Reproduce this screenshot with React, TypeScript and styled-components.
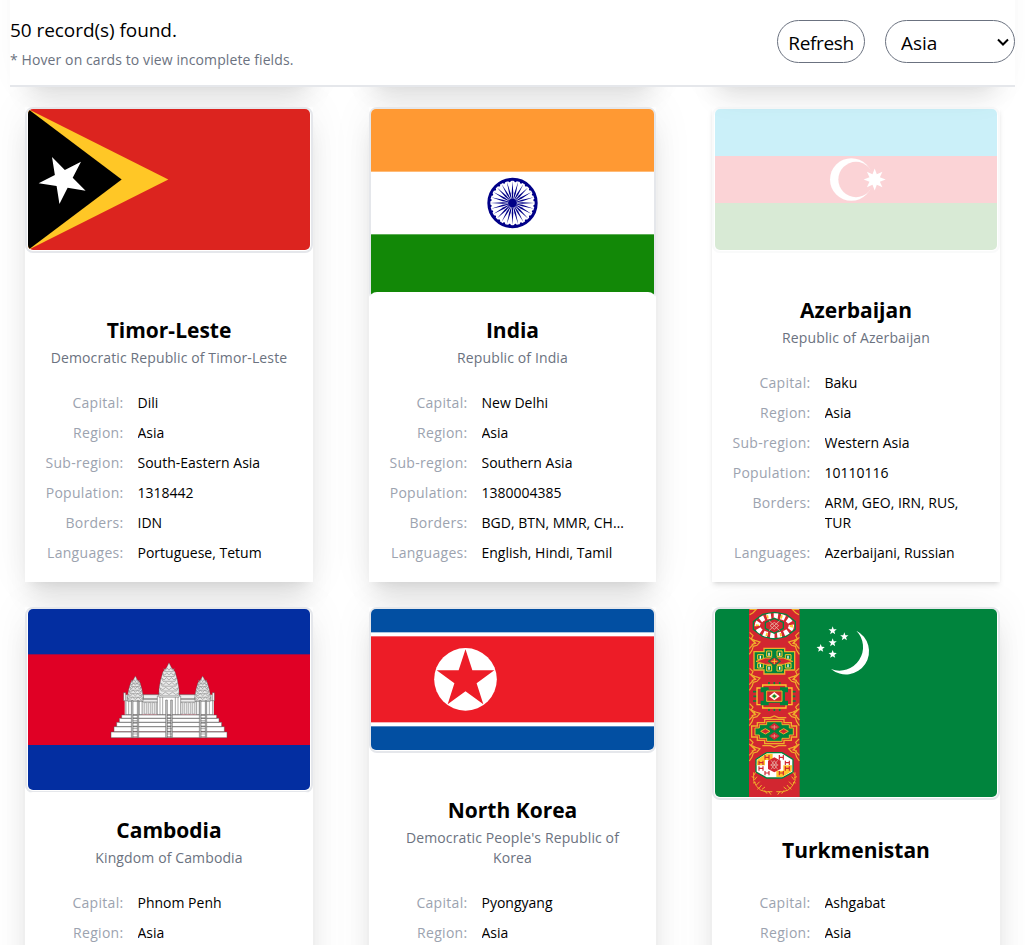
import React from "react";
import styled, { createGlobalStyle, css } from "styled-components";

const GlobalStyle = createGlobalStyle`
  *, *::before, *::after { box-sizing: border-box; }
  body { margin: 0; background: #fff; color: #000; font-family: "Open Sans", "Noto Sans", sans-serif; }
  button, select { font: inherit; color: inherit; }
`;

const Page = styled.div`
  width: 1025px;
  height: 945px;
  overflow: hidden;
  padding: 0 10px;
`;

const Header = styled.header`
  position: relative;
  z-index: 2;
  display: flex;
  justify-content: space-between;
  align-items: flex-start;
  height: 87px;
  padding-top: 15px;
  background: #fff;
  border-bottom: 2px solid #e5e7eb;
`;

const Count = styled.div`
  font-size: 19px;
  line-height: 30px;
  letter-spacing: -0.06px;
`;

const Hint = styled.div`
  margin-top: 5px;
  font-size: 14px;
  line-height: 20px;
  letter-spacing: 0.1px;
  color: #6b7280;
`;

const Controls = styled.div`
  display: flex;
  gap: 20px;
  padding-top: 5px;
`;

const pill = css`
  height: 43px;
  border: 1px solid #6b7280;
  border-radius: 22px;
  background: #fff;
  font-size: 19px;
`;

const RefreshButton = styled.button`
  ${pill}
  width: 88px;
  padding: 2px 0 0;
  letter-spacing: -0.35px;
`;

const SelectWrap = styled.div`
  position: relative;
  svg {
    position: absolute;
    right: 5px;
    top: 17px;
    pointer-events: none;
  }
`;

const RegionSelect = styled.select`
  ${pill}
  appearance: none;
  display: block;
  width: 130px;
  padding: 2px 0 0 15px;
`;

const Grid = styled.main`
  display: grid;
  grid-template-columns: 288px 287px 288px;
  grid-template-rows: 475px;
  grid-auto-rows: 475px;
  justify-content: space-between;
  row-gap: 25px;
  margin-top: -480px;
  padding: 0 15px;
`;

const Card = styled.article<{ $active?: boolean }>`
  display: grid;
  grid-template: 100% / 100%;
  box-shadow: ${(p) =>
    p.$active
      ? "0 4px 6px -1px rgba(0,0,0,.1), 0 2px 4px -2px rgba(0,0,0,.1)"
      : "0 0 40px rgba(0,0,0,.06), 0 20px 25px -5px rgba(0,0,0,.1), 0 8px 10px -6px rgba(0,0,0,.06)"};
`;

const FlagFrame = styled.div<{ $faded?: boolean }>`
  grid-area: 1 / 1;
  align-self: start;
  padding: 0 1px 1px;
  border: 2px solid #e5e7eb;
  border-radius: 8px;
  background: ${(p) => (p.$faded ? "transparent" : "#fff")};
  opacity: ${(p) => (p.$faded ? 0.2 : 1)};
  svg { display: block; width: 100%; border-radius: 5px; }
  ${Card}:nth-child(3n + 2) & { padding: 0 0 1px; }
`;

const Body = styled.div`
  grid-area: 1 / 1;
  align-self: end;
  position: relative;
  padding: 24px 20px 19px;
  border-radius: 8px 8px 0 0;
  background: #fff;
`;

const Name = styled.h2`
  margin: 0;
  padding-bottom: 4px;
  font-size: 21px;
  font-weight: 700;
  line-height: 28px;
  text-align: center;
`;

const Official = styled.p`
  margin: 0;
  font-size: 14px;
  line-height: 20px;
  letter-spacing: 0.12px;
  text-align: center;
  color: #6b7280;
`;

const Fields = styled.dl`
  display: grid;
  grid-template-columns: 78.500px 150px;
  column-gap: 14px;
  row-gap: 10px;
  margin: 25px 0 0;
  font-size: 14px;
  line-height: 20px;
`;

const Label = styled.dt`
  text-align: right;
  letter-spacing: 0.3px;
  white-space: nowrap;
  color: #9ca3af;
`;

const Value = styled.dd<{ $wrap?: boolean }>`
  margin: 0;
  overflow: hidden;
  text-overflow: ellipsis;
  white-space: ${(p) => (p.$wrap ? "normal" : "nowrap")};
`;

function star(cx: number, cy: number, r: number, inner: number, n = 5, start = -90) {
  return Array.from({ length: n * 2 }, (_, i) => {
    const a = ((start + (i * 180) / n) * Math.PI) / 180;
    const d = i % 2 ? inner : r;
    return `${(cx + d * Math.cos(a)).toFixed(1)},${(cy + d * Math.sin(a)).toFixed(1)}`;
  }).join(" ");
}

const TimorFlag = () => (
  <svg viewBox="0 0 846 423">
    <rect width="846" height="423" fill="#dc241f" />
    <path d="M0 0 421 211.500 0 423z" fill="#ffc726" />
    <path d="M0 0 281 211.500 0 423z" />
    <polygon points={star(106, 211, 75, 28.5, 5, -117)} fill="#fff" />
  </svg>
);

const IndiaFlag = () => (
  <svg viewBox="0 0 849 566">
    <rect width="849" height="566" fill="#fff" />
    <rect width="849" height="188" fill="#f93" />
    <rect y="376" width="849" height="190" fill="#128807" />
    <g transform="translate(424.500 282)" fill="#008">
      <circle r="71" fill="none" stroke="#008" strokeWidth="9" />
      <circle r="13" />
      {Array.from({ length: 24 }, (_, i) => (
        <g key={i} transform={`rotate(${i * 15})`}>
          <path d="M0 0 -2.400 -30 0 -66 2.400 -30z" />
          <circle r="3.500" cx="8.700" cy="-66" />
        </g>
      ))}
    </g>
  </svg>
);

const AzerbaijanFlag = () => (
  <svg viewBox="0 0 846 423">
    <rect width="846" height="141" fill="#00b9e4" />
    <rect y="141" width="846" height="141" fill="#ed2939" />
    <rect y="282" width="846" height="141" fill="#3f9c35" />
    <circle cx="409" cy="211.500" r="64" fill="#fff" />
    <circle cx="423" cy="211.500" r="53" fill="#ed2939" />
    <polygon points={star(479, 211.5, 33, 17, 8)} fill="#fff" />
  </svg>
);

const Tower = ({ x, y, w, h }: { x: number; y: number; w: number; h: number }) => (
  <g transform={`translate(${x} ${y})`} fill="#e9e9e9" stroke="#555" strokeWidth="1.200">
    <path d={`M0 0 L${w * 0.12} ${h * 0.14} L${w * 0.3} ${h * 0.26} L${w * 0.42} ${h * 0.5} L${w * 0.5} ${h * 0.75} V${h} H${-w * 0.5} V${h * 0.75} L${-w * 0.42} ${h * 0.5} L${-w * 0.3} ${h * 0.26} L${-w * 0.12} ${h * 0.14}Z`} />
    {[0.2, 0.34, 0.48, 0.62, 0.76, 0.9].map((t, i) => {
      const s = w * (0.2 + t * 0.36);
      return (
        <path
          key={i}
          d={`M${-s} ${h * t - 4} l${s * 0.35} 6 l${s * 0.3} -7 l${s * 0.35} 7 l${s * 0.35} -7 l${s * 0.3} 7 l${s * 0.35} -6 l${-s * 0.2} 10 H${-s * 0.8}Z`}
        />
      );
    })}
  </g>
);

const CambodiaFlag = () => (
  <svg viewBox="0 0 846 543">
    <rect width="846" height="543" fill="#032ea1" />
    <rect y="136" width="846" height="272" fill="#e00025" />
    <g transform="translate(186 123)" stroke="#555" strokeWidth="1.500" fill="#fff">
      <path d="M104 134h268v60H104z" fill="#ddd" stroke="none" />
      <path d="M160 134h48l10 12h42l10-12h46v12H160zM158 148h158v8H158z" fill="#eee" />
      {Array.from({ length: 13 }, (_, i) => 164 + i * 12).map((x) => (
        <path key={x} d={`M${x} 158v34h5v-34z`} strokeWidth="1" />
      ))}
      <path d="M101 128h6v24h-6zM367 128h6v24h-6zM108 152h48v42h-48zM320 152h48v42h-48z" />
      <path d="M116 152v42M126 152v42M148 152v42M328 152v42M348 152v42M358 152v42" fill="none" />
      <Tower x={136} y={78} w={46} h={76} />
      <Tower x={338} y={78} w={46} h={76} />
      <path d="M202 138h70v56h-70z" />
      <path d="M210 140v54M218 140v54M256 140v54M264 140v54" fill="none" />
      <Tower x={237} y={38} w={60} h={104} />
      <path d="M95 195h285v10H95zM88 205h299v12H88zM80 217h315v13H80zM72 230h331v15H72zM63 246h348v17H63z" />
      <path d="M124 152h5v111h-5zM142 152h4v111h-4zM227 150h5v113h-5zM242 150h5v113h-5zM328 152h5v111h-5zM346 152h4v111h-4z" fill="#ccc" />
      {[128, 231, 332].map((x) => (
        <path key={x} d={`M${x} 196h14M${x} 204h14M${x} 212h14M${x} 220h14M${x} 228h14M${x} 236h14M${x} 244h14M${x} 252h14M${x} 260h14`} />
      ))}
    </g>
  </svg>
);

const NorthKoreaFlag = () => (
  <svg viewBox="0 0 849 423">
    <rect width="849" height="423" fill="#024fa2" />
    <rect y="70" width="849" height="282" fill="#fff" />
    <rect y="82" width="849" height="258" fill="#ed1c27" />
    <circle cx="283.500" cy="211" r="94" fill="#fff" />
    <polygon points={star(283.5, 212, 91, 35)} fill="#ed1c27" />
  </svg>
);

const stems = [0, 108, 214, 320];

const TurkmenistanFlag = () => (
  <svg viewBox="45 27 846 564">
    <rect x="45" y="27" width="846" height="564" fill="#00843d" />
    <rect x="147" y="27" width="152" height="564" fill="#d22630" />
    <g fill="none" stroke="#f0ae2c" strokeWidth="3.500">
      {[223 - 76, 223 + 76].map((x, k) => (
        <g key={x} transform={`translate(${x} 0) scale(${k ? -1 : 1} 1)`}>
          <path d="M2 28 22 28 12 38 2 44" />
          {stems.map((y) => (
            <path
              key={y}
              transform={`translate(0 ${y})`}
              d="M2 97 12 107 7 116 20 122 33 126 24 136 13 139 9 151 1 163M1 112 17 128 1 146M13 121 20 130 8 133"
            />
          ))}
        </g>
      ))}
    </g>
    <g strokeWidth="4">
      <path d="M223 37 258 43 286 65 286 88 258 109 223 117 188 109 160 88 160 65 188 43Z" fill="#d22630" stroke="#00843d" />
      <ellipse cx="223" cy="77" rx="51" ry="29" fill="none" stroke="#fff" strokeWidth="16" strokeDasharray="13 8" />
      <ellipse cx="223" cy="77" rx="51" ry="29" fill="none" stroke="#ffc72c" strokeWidth="10" strokeDasharray="5 37" />
      <path d="M223 55 250 67 250 85 223 100 196 85 196 67Z" fill="#d22630" stroke="#00843d" />
      <path d="M207 62 239 92M239 62 207 92M210 77 223 67 236 77 223 88Z" fill="#d22630" stroke="#e9b8a8" strokeWidth="2.500" />
    </g>
    <g strokeWidth="4">
      <path d="M192 145H254V155H284V210H254V222H192V210H162V155H192Z" fill="#00843d" stroke="#f0ae2c" />
      <path d="M173 164H190V178H173ZM173 190H190V204H173ZM256 164H273V178H256ZM256 190H273V204H256ZM200 153H215V169H200ZM231 153H246V169H231ZM200 197H215V213H200ZM231 197H246V213H231Z" fill="#00843d" stroke="#ffc72c" strokeWidth="3" />
      <path d="M181 167v9M181 193v9M264 167v9M264 193v9M207 158v9M239 158v9M207 200v9M239 200v9" stroke="#fff" />
      <path d="M168 184 196 174H250L278 184 250 193H196Z" fill="#d22630" stroke="#f0ae2c" strokeWidth="3" />
      <path d="M206 184 223 170 240 184 223 197Z" fill="#d22630" stroke="#00843d" />
      <path d="M214 184H232M223 176V192" stroke="#ffc72c" strokeWidth="3" />
    </g>
    <g>
      <path d="M207 246v9M223 246v9M239 246v9M207 325v8M223 325v8M239 325v8M159 275h14v28h-14M287 275h-14v28h14M160 289h12M286 289h-12" fill="none" stroke="#00843d" strokeWidth="5" />
      <path d="M188 255H258V264H276V314H258V324H188V314H171V264H188Z" fill="#d22630" stroke="#ffc72c" strokeWidth="4" />
      <path d="M182 262H206V269H240V262H264V277H255V302H264V316H240V308H206V316H182V302H191V277H182Z" fill="#00843d" />
      <path d="M200 273H246V304H200Z" fill="#d22630" stroke="#f0ae2c" strokeWidth="3" />
      <path d="M207 289 223 276 239 289 223 301Z" fill="#fff" />
      <path d="M223 282 231 289 223 295 215 289Z" fill="#00843d" stroke="#ffc72c" strokeWidth="2" />
    </g>
    <g stroke="#f0ae2c" strokeWidth="4" fill="none">
      <path d="M187 353H211L223 348 235 353H259M187 437H211L223 442 235 437H259M194 358H252V368H274V378H290V411H274V421H252V431H194V421H172V411H155V378H172V368H194Z" />
      <path d="M200 365H246V374H268V384H280V405H268V415H246V424H200V415H178V405H165V384H178V374H200Z" fill="#00843d" strokeWidth="3" />
      <path d="M208 381 223 369 238 381 223 391ZM208 408 223 397 238 408 223 419Z" fill="#d22630" stroke="#d22630" strokeWidth="2" />
      <path d="M182 394 196 386 210 394 196 402ZM237 394 251 386 265 394 251 402Z" fill="#d22630" strokeWidth="3" />
      <path d="M214 381H232M223 375V388M214 408H232M223 402V414" stroke="#e7b9a0" strokeWidth="2" />
    </g>
    <path d="M200 458H246L279 478V516L246 534H200L168 516V478Z" fill="#fff" stroke="#00843d" strokeWidth="4" />
    <path d="M172 479 199 461H218V480H195V496H170ZM275 514 247 531H229V512H250V496H276Z" fill="#ffc72c" />
    <path d="M195 465v14M207 465v14M195 472h12M238 465v14M250 465v14M238 472h12M177 482v13M189 482v13M177 488h12M256 482v13M268 482v13M256 488h12M177 499v13M189 499v13M177 505h12M256 499v13M268 499v13M256 505h12M195 513v13M207 513v13M195 519h12M238 513v13M250 513v13M238 519h12" stroke="#d22630" strokeWidth="3.500" />
    <path d="M223 472 242 482V507L223 517 204 507V482Z" fill="#d22630" />
    <path d="M213 481 233 508M233 481 213 508M211 495H235M223 482 232 495 223 507 214 495Z" fill="none" stroke="#e7c3b5" strokeWidth="2" />
    <g fill="none" stroke="#f0ae2c" strokeWidth="3">
      {[1, -1].map((s) => (
        <path
          key={s}
          transform={`translate(223 0) scale(${s} 1)`}
          d="M6 575Q48 582 62 542V517M18 573 10 584M29 571 22 581M37 568 28 561M46 565 38 555M45 563 51 568M54 555 44 545M56 547 64 549M60 540 52 530M60 533 68 530M62 526 56 517"
        />
      ))}
    </g>
    <path d="M469 92A69.400 69.400 0 1 1 393 207A70.500 70.500 0 0 0 469 92Z" fill="#fff" />
    {[[398, 92], [433, 110], [398, 128], [362, 145], [398, 163]].map(([x, y]) => (
      <polygon key={`${x}-${y}`} points={star(x, y, 13, 5.5)} fill="#fff" />
    ))}
  </svg>
);

interface Country {
  name: string;
  official?: string;
  flag: React.FC;
  active?: boolean;
  fields: string[];
}

const labels = ["Capital:", "Region:", "Sub-region:", "Population:", "Borders:", "Languages:"];

const countries: Country[] = [
  {
    name: "Timor-Leste",
    official: "Democratic Republic of Timor-Leste",
    flag: TimorFlag,
    fields: ["Dili", "Asia", "South-Eastern Asia", "1318442", "IDN", "Portuguese, Tetum"],
  },
  {
    name: "India",
    official: "Republic of India",
    flag: IndiaFlag,
    fields: ["New Delhi", "Asia", "Southern Asia", "1380004385", "BGD, BTN, MMR, CHN, NPL, PAK", "English, Hindi, Tamil"],
  },
  {
    name: "Azerbaijan",
    official: "Republic of Azerbaijan",
    flag: AzerbaijanFlag,
    active: true,
    fields: ["Baku", "Asia", "Western Asia", "10110116", "ARM, GEO, IRN, RUS, TUR", "Azerbaijani, Russian"],
  },
  {
    name: "Cambodia",
    official: "Kingdom of Cambodia",
    flag: CambodiaFlag,
    fields: ["Phnom Penh", "Asia", "South-Eastern Asia", "16718971", "LAO, THA, VNM", "Khmer"],
  },
  {
    name: "North Korea",
    official: "Democratic People's Republic of Korea",
    flag: NorthKoreaFlag,
    fields: ["Pyongyang", "Asia", "Eastern Asia", "25778815", "CHN, KOR, RUS", "Korean"],
  },
  {
    name: "Turkmenistan",
    flag: TurkmenistanFlag,
    fields: ["Ashgabat", "Asia", "Central Asia", "6031187", "AFG, IRN, KAZ, UZB", "Russian, Turkmen"],
  },
];

const CountryCard = ({ country }: { country: Country }) => {
  const Flag = country.flag;
  return (
    <Card $active={country.active}>
      <FlagFrame $faded={country.active}>
        <Flag />
      </FlagFrame>
      <Body>
        <Name>{country.name}</Name>
        {country.official && <Official>{country.official}</Official>}
        <Fields>
          {labels.map((label, i) => (
            <React.Fragment key={label}>
              <Label>{label}</Label>
              <Value $wrap={country.active}>{country.fields[i]}</Value>
            </React.Fragment>
          ))}
        </Fields>
      </Body>
    </Card>
  );
};

export default function App() {
  return (
    <>
      <GlobalStyle />
      <Page>
        <Header>
          <div>
            <Count>50 record(s) found.</Count>
            <Hint>* Hover on cards to view incomplete fields.</Hint>
          </div>
          <Controls>
            <RefreshButton>Refresh</RefreshButton>
            <SelectWrap>
              <RegionSelect defaultValue="Asia">
                <option>Asia</option>
              </RegionSelect>
              <svg width="14" height="10" viewBox="0 0 14 10" fill="none" stroke="#000" strokeWidth="2">
                <path d="M2 2.500 7 7.500 12 2.500" />
              </svg>
            </SelectWrap>
          </Controls>
        </Header>
        <Grid>
          {/* the row scrolled beneath the header */}
          <Card />
          <Card />
          <Card />
          {countries.map((c) => (
            <CountryCard key={c.name} country={c} />
          ))}
        </Grid>
      </Page>
    </>
  );
}
